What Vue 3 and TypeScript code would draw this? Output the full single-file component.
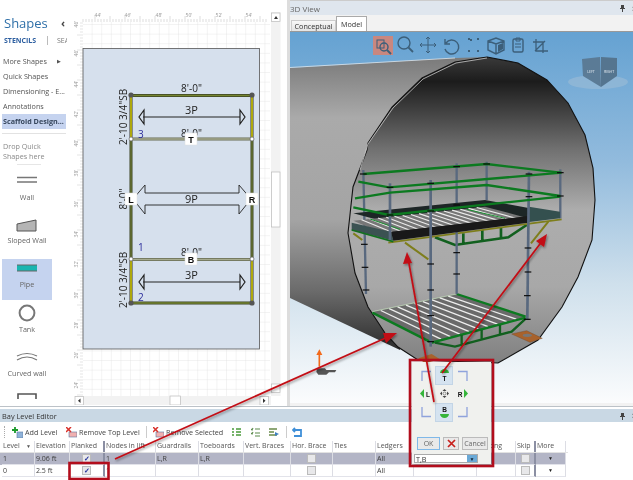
<script setup lang="ts">
type P = [number, number]
const lerp = (a: P, b: P, t: number): P => [a[0] + (b[0] - a[0]) * t, a[1] + (b[1] - a[1]) * t]
function stripes(a: P, b: P, c: P, d: P, n: number) {
  const out: { p: P; q: P }[] = []
  for (let i = 1; i <= n; i++) out.push({ p: lerp(a, b, i / (n + 1)), q: lerp(c, d, i / (n + 1)) })
  return out
}
const upperStripes = stripes([205, 212], [600, 170], [325, 262], [735, 206], 15)
const lowerStripes = stripes([262, 487], [515, 433], [440, 575], [722, 500], 9)

const posts: number[][] = [
  [235, 60, 243, 432], [315, 100, 315, 270], [437, 90, 437, 590], [515, 40, 515, 432],
  [605, 35, 605, 150], [732, 65, 727, 510], [826, 58, 826, 205],
]
const collars: P[] = [
  [238, 283], [240, 352], [243, 420], [437, 342], [437, 420], [437, 497], [437, 575], [515, 308], [515, 372],
  [729, 294], [729, 366], [727, 437], [727, 508], [235, 72], [315, 112], [437, 100], [515, 50], [605, 42],
  [732, 72], [826, 68], [315, 195], [437, 183], [515, 165], [826, 138], [732, 140],
]
const rails: string[] = [
  '235,72 605,42 826,68', '220,95 312,112 830,68', '210,145 315,128 605,105 826,138',
  '205,172 312,195 826,140',
]
const stencils = ['Quick Shapes', 'Dimensioning - E...', 'Annotations']
const topTicks = [98, 128, 159, 189, 219, 249]
const topLabels = ["44'", "46'", "48'", "50'", "52'", "54'"]
const leftLabels = [[24, "46'"], [53, "46'"], [84, "44'"], [114, "42'"], [143, "40'"], [173, "38'"], [204, "36'"], [234, "34'"], [264, "32'"], [295, "30'"], [325, "28'"], [355, "26'"], [385, "24'"]] as [number, string][]
const columns = ['Level', 'Elevation', 'Planked', 'Nodes in lift', 'Guardrails', 'Toeboards', 'Vert. Braces', 'Hor. Brace', 'Ties', 'Ledgers', 'Transoms', 'Netting', 'Skip', 'More']
const rows = [
  { cls: 'sel', level: '1', elev: '9.06 ft', nodes: '1', g: 'L,R', t: 'L,R' },
  { cls: '', level: '0', elev: '2.5 ft', nodes: '1', g: '', t: '' },
]
</script>

<template>
  <div class="app">
    <div class="top">
      <aside class="shapes">
        <div class="shapes-head"><span class="shapes-title">Shapes</span><span class="chev">‹</span></div>
        <div class="tabs"><b>STENCILS</b><i></i><span>SEA</span></div>
        <div class="stencil more">More Shapes <em>▶</em></div>
        <div v-for="s in stencils" :key="s" class="stencil">{{ s }}</div>
        <div class="stencil active">Scaffold Design...</div>
        <div class="rule"></div>
        <div class="drop">Drop Quick<br />Shapes here</div>
        <div class="short-rule"></div>
        <div class="item wall">
          <svg width="24" height="10" viewBox="0 0 24 10"><path d="M2 2.5h20M2 7h20" stroke="#777" stroke-width="1.4" /></svg>
          <span>Wall</span>
        </div>
        <div class="item sloped">
          <svg width="24" height="14" viewBox="0 0 24 14"><path d="M2 5 21 1v11H2z" fill="#b5b5b5" stroke="#555" /></svg>
          <span>Sloped Wall</span>
        </div>
        <div class="item pipe">
          <svg width="24" height="10" viewBox="0 0 24 10"><rect x="2" y="2" width="20" height="6" fill="#19b5b0" /><path d="M2 2h20M2 8h20" stroke="#666" /></svg>
          <span>Pipe</span>
        </div>
        <div class="item tank">
          <svg width="20" height="20" viewBox="0 0 20 20"><circle cx="10" cy="10" r="7.4" fill="none" stroke="#777" stroke-width="2" /></svg>
          <span>Tank</span>
        </div>
        <div class="item curved">
          <svg width="24" height="10" viewBox="0 0 24 10"><path d="M2 5Q12 0 22 5M2 9Q12 3 22 9" fill="none" stroke="#777" stroke-width="1.2" /></svg>
          <span>Curved wall</span>
        </div>
        <div class="item last">
          <svg width="24" height="8" viewBox="0 0 24 8"><path d="M3 7V2h18v5" fill="none" stroke="#555" stroke-width="1.6" /></svg>
        </div>
      </aside>

      <section class="canvas">
        <svg width="210" height="405" viewBox="73 0 210 405" class="drawing">
          <defs>
            <pattern id="grid" x="83" y="25" width="9.6" height="9.6" patternUnits="userSpaceOnUse">
              <path d="M9.6 0V9.6H0" fill="none" stroke="#dedede" stroke-width=".7" />
            </pattern>
          </defs>
          <rect x="83" y="22" width="187" height="374" fill="#fff" />
          <rect x="83" y="22" width="187" height="374" fill="url(#grid)" />
          <g class="ruler">
            <text v-for="(t, i) in topTicks" :key="t" :x="t" y="17">{{ topLabels[i] }}</text>
            <path v-for="i in 62" :key="'t' + i" :d="`M${80 + i * 3} ${i % 5 ? 19 : 16}V22`" stroke="#c8c8c8" stroke-width=".6" />
            <path v-for="i in 125" :key="'l' + i" :d="`M${i % 5 ? 80 : 77} ${20 + i * 3}H83`" stroke="#d4d4d4" stroke-width=".6" />
            <text v-for="l in leftLabels" :key="l[0]" :transform="`translate(78 ${l[0]}) rotate(-90)`">{{ l[1] }}</text>
          </g>
          <rect x="83" y="48.5" width="176.5" height="300.5" fill="#d6e0ed" stroke="#555" stroke-width=".8" />

          <path d="M131 95V139M252 95V139M131 259V303M252 259V303" stroke="#333" stroke-width="3" />
          <path d="M131 95V139M252 95V139M131 259V303M252 259V303" stroke="#d8d000" stroke-width="1.5" />
          <path d="M131 139V259M252 139V259" stroke="#3b4225" stroke-width="3" />
          <path d="M131 139V259M252 139V259" stroke="#7c8b3a" stroke-width="1" />
          <path d="M131 95.5H252M131 303H252" stroke="#3b4225" stroke-width="3.2" />
          <path d="M131 95.5H252M131 303H252" stroke="#75852f" stroke-width="1.4" />
          <path d="M131 139H252M131 259.5H252" stroke="#666b52" stroke-width="3.2" />
          <path d="M131 139H252M131 259.5H252" stroke="#a6ab90" stroke-width="1.4" />
          <circle v-for="c in [[131, 95], [252, 95], [131, 303], [252, 303]]" :key="c.join()" :cx="c[0]" :cy="c[1]" r="2.6" fill="#555" />
          <circle v-for="c in [[131, 139], [252, 139], [131, 259], [252, 259]]" :key="'w' + c.join()" :cx="c[0]" :cy="c[1]" r="2" fill="#fff" stroke="#666" stroke-width=".7" />

          <g class="dim">
            <text x="191.5" y="92">8'-0"</text>
            <text x="191.5" y="114" class="big">3P</text>
            <text x="191.5" y="137">8'-0"</text>
            <text x="191.5" y="256">8'-0"</text>
            <text x="191.5" y="279" class="big">3P</text>
            <text transform="translate(127 117) rotate(-90)">2'-10 3/4"SB</text>
            <text transform="translate(127 199) rotate(-90)">8'-0"</text>
            <text transform="translate(127 280) rotate(-90)">2'-10 3/4"SB</text>
          </g>
          <g class="arrow-thin">
            <path d="M143 117H240M144 110l-5 7 5 7zM240 110l5 7-5 7z" />
            <path d="M143 282H240M144 275l-5 7 5 7zM240 275l5 7-5 7z" />
          </g>
          <path d="M145 193V185L133 199 145 214V205H239V214L251 199 239 185V193z" fill="#d6e0ed" stroke="#222" stroke-width=".9" />
          <text x="191.5" y="203" class="big-fg">9P</text>

          <g class="handle">
            <rect x="185" y="133" width="12" height="12" /><text x="191" y="142.5">T</text>
            <rect x="125" y="193" width="12" height="12" /><text x="131" y="202.5">L</text>
            <rect x="246" y="193" width="12" height="12" /><text x="252" y="202.5">R</text>
            <rect x="185" y="253" width="12" height="12" /><text x="191" y="262.5">B</text>
          </g>
          <g class="num">
            <text x="138" y="138">3</text><text x="138" y="251">1</text><text x="138" y="301">2</text>
          </g>

          <rect x="271" y="12" width="9.5" height="384" fill="#f2f2f2" />
          <rect x="271.5" y="13" width="8.5" height="8.5" fill="#fff" stroke="#bbb" stroke-width=".7" />
          <path d="M274 19l2-3 2 3z" fill="#333" />
          <rect x="271.5" y="172" width="8.5" height="55" fill="#fff" stroke="#bbb" stroke-width=".7" />
          <rect x="271.5" y="384" width="8.5" height="8.5" fill="#fff" stroke="#bbb" stroke-width=".7" />
          <rect x="75" y="396" width="196" height="9" fill="#f2f2f2" />
          <rect x="75" y="396.5" width="8.5" height="8.5" fill="#fff" stroke="#bbb" stroke-width=".7" />
          <path d="M80.5 398.5l-2.5 2.2 2.5 2.2z" fill="#333" />
          <rect x="170" y="396" width="10.5" height="9" fill="#fff" stroke="#bbb" stroke-width=".7" />
          <rect x="260" y="396.5" width="8.5" height="8.5" fill="#fff" stroke="#bbb" stroke-width=".7" />
          <path d="M263 398.5l2.5 2.2-2.5 2.2z" fill="#333" />
        </svg>
      </section>

      <section class="view">
        <header class="view-title"><span>3D View</span><span class="pins"><svg width="7" height="8" viewBox="0 0 7 8"><path d="M2 1h3v3h1v1H4v3H3V5H1V4h1z" fill="#444" /></svg><b>×</b></span></header>
        <nav class="view-tabs"><span class="tab">Conceptual</span><span class="tab on">Model</span></nav>
        <svg class="scene" width="343" height="371" viewBox="290 32 343 371">
          <defs>
            <linearGradient id="sky" x1="0" y1="32" x2="0" y2="403" gradientUnits="userSpaceOnUse">
              <stop offset="0" stop-color="#65a2d2" /><stop offset=".35" stop-color="#92bbdd" />
              <stop offset=".68" stop-color="#cfe0ec" /><stop offset="1" stop-color="#fbfcfd" />
            </linearGradient>
            <linearGradient id="body" x1="0" y1="60" x2="0" y2="350" gradientUnits="userSpaceOnUse">
              <stop offset="0" stop-color="#7c7c7c" /><stop offset=".2" stop-color="#aaa" />
              <stop offset=".55" stop-color="#a4a4a4" /><stop offset=".8" stop-color="#6a6a6a" /><stop offset="1" stop-color="#2c2c2c" />
            </linearGradient>
            <linearGradient id="inner" x1="0" y1="57" x2="0" y2="363" gradientUnits="userSpaceOnUse">
              <stop offset="0" stop-color="#3a3a3a" /><stop offset=".08" stop-color="#1c1c1c" />
              <stop offset=".3" stop-color="#707070" /><stop offset=".5" stop-color="#adadad" />
              <stop offset=".75" stop-color="#a8a8a8" /><stop offset="1" stop-color="#808080" />
            </linearGradient>
          </defs>
          <rect x="290" y="32" width="343" height="371" fill="url(#sky)" />
          <polygon points="290,68 455,58 487,57 400,350 290,298" fill="url(#body)" />
          <polygon
            points="487,57 518,63 547,80 568,103 585,135 593,168 595,200 592,240 578,277 562,307 538,340 498,363 418,360 398,347 385,333 368,307 355,273 348,233 353,187 367,150 368,143 392,107 422,78 455,62"
            fill="url(#inner)" stroke="#111" stroke-width="1.1"
          />
          <polyline points="290,67.5 455,58" fill="none" stroke="#eee" stroke-width=".7" />
          <polyline points="360,170 368,144 393,108 423,79 456,63 487,58" fill="none" stroke="#ddd" stroke-width=".7" />

          <g transform="translate(285 150) scale(0.3333)">
            <polygon points="400,625 440,612 465,628 420,640" fill="#a8622c" />
            <polygon points="680,552 725,542 772,565 735,577" fill="#a8622c" stroke="#6b3d1b" />
            <ellipse cx="727" cy="556" rx="14" ry="5" fill="#777" />
            <polygon points="262,485 515,432 722,500 440,578" fill="#6a6a6a" />
            <line v-for="(s, i) in lowerStripes" :key="'ls' + i" :x1="s.p[0]" :y1="s.p[1]" :x2="s.q[0]" :y2="s.q[1]" stroke="#eee" stroke-width="4" />
            <path d="M262 488 440 578 722 503M515 432 722 500" fill="none" stroke="#0c7a20" stroke-width="7" />
            <path d="M262 485 515 432" fill="none" stroke="#c8e6c0" stroke-width="2" />
            <path d="M450 578 510 590 680 545 722 506M530 555V585M590 540V570M645 525V552" fill="none" stroke="#12601f" stroke-width="7" />

            <path d="M450 262 510 285 670 262 725 225M535 250V280M592 240V272M648 232V262" fill="none" stroke="#12601f" stroke-width="8" />
            <path d="M360 278 430 328M790 215 738 280M205 250 232 270" stroke="#7e7e1c" stroke-width="6" />
            <path d="M310 278 830 208" stroke="#7e7e1c" stroke-width="5" />

            <line v-for="(p, i) in posts.slice(0, 1).concat(posts.slice(3, 5), posts.slice(6))" :key="'bp' + i" :x1="p[0]" :y1="p[1]" :x2="p[2]" :y2="p[3]" stroke="#59697f" stroke-width="7" />
            <polygon points="205,190 600,150 735,175 735,215 300,215" fill="#1d2626" />
            <polygon points="205,212 600,170 735,206 325,264" fill="#777" />
            <line v-for="(s, i) in upperStripes" :key="'us' + i" :x1="s.p[0]" :y1="s.p[1]" :x2="s.q[0]" :y2="s.q[1]" stroke="#ececec" stroke-width="3.4" />
            <path d="M255 207 345 238M545 178 660 205" stroke="#1a9030" stroke-width="3" fill="none" />
            <polygon points="200,218 318,245 325,272 200,240" fill="#3b5252" />
            <polygon points="318,245 730,198 730,218 325,272" fill="#191919" />
            <polygon points="732,170 825,185 825,205 732,216" fill="#34504f" />
            <path d="M200 240 325 275" stroke="#12701f" stroke-width="5" />

            <line v-for="(p, i) in [posts[1], posts[2], posts[5]]" :key="'fp' + i" :x1="p[0]" :y1="p[1]" :x2="p[2]" :y2="p[3]" stroke="#59697f" stroke-width="8" />
            <polyline v-for="(r, i) in rails" :key="'r' + i" :points="r" fill="none" stroke="#0c7a20" stroke-width="7" />
            <path v-for="(c, i) in collars" :key="'c' + i" :d="`M${c[0] - 10} ${c[1]}h20`" stroke="#0a0a0a" stroke-width="3.5" />
          </g>

          <g class="tool" fill="none" stroke="#3c5f7a" stroke-width="1.4">
            <rect x="373" y="36" width="20" height="19" fill="#c9877f" stroke="none" />
            <rect x="377" y="40" width="7" height="8" stroke-width="1" />
            <circle cx="384" cy="47" r="4" /><path d="M387 50l4 4" stroke-width="2" />
            <circle cx="404" cy="43" r="6" /><path d="M408.500 47.500l4.500 4.500" stroke-width="1.8" />
            <path d="M428 37v16M420 45h16M426 39l2-2 2 2M426 51l2 2 2-2M422 43l-2 2 2 2M434 43l2 2-2 2" stroke-width="1" />
            <path d="M445 39v5h5M446 43a7 7 0 1 1-1 6" />
            <path d="M468 39h3v3M477 39h3M468 51h3M477 51h3" stroke-width="2" stroke-dasharray="2 1" />
            <path d="M488 41l8-3 8 3v9l-8 4-8-4zM488 41l8 3 8-3M496 44v10" /><path d="M498 45l5-2v6l-5 3z" fill="#3c5f7a" stroke="none" />
            <rect x="513" y="39" width="10" height="13" rx="1.500" /><path d="M516 38h4v3h-4zM515 44h6M515 47h6" stroke-width="1" />
            <path d="M536 39v12h12M533 42h10v11M535 51l10-10" stroke-width="1.3" />
          </g>
          <g class="cube">
            <ellipse cx="598" cy="82" rx="30" ry="7" fill="#9dbdd6" opacity=".6" />
            <polygon points="582,59 600,57 601,87 583,76" fill="#5b7b96" />
            <polygon points="601,57 617,58 617,76 601,87" fill="#55758f" />
            <text x="591" y="73">LEFT</text><text x="609" y="73">RIGHT</text>
          </g>
          <g transform="translate(285 150) scale(0.3333)">
            <path d="M103 650V612" stroke="#f26a1b" stroke-width="5" /><path d="M94 615 103 598 112 615z" fill="#f26a1b" />
            <path d="M96 655h24l4 5h30l-4 7h-18l-8 7h-24l-6-8z" fill="#555" />
          </g>
        </svg>
      </section>
    </div>

    <section class="editor">
      <header class="editor-title"><span>Bay Level Editor</span><span class="pins"><svg width="7" height="8" viewBox="0 0 7 8"><path d="M2 1h3v3h1v1H4v3H3V5H1V4h1z" fill="#444" /></svg><b>×</b></span></header>
      <div class="toolbar">
        <span class="grip"></span>
        <span class="btn add"><svg width="11" height="11" viewBox="0 0 11 11"><rect x="5" y="5" width="6" height="6" fill="#8fb2d8" stroke="#5a7ba5" stroke-width=".6" /><path d="M3 0v6M0 3h6" stroke="#1a9a2a" stroke-width="1.8" /></svg>Add Level</span>
        <span class="btn rem1"><svg width="11" height="11" viewBox="0 0 11 11"><rect x="3" y="5" width="8" height="5" fill="#f0b0b0" stroke="#5a7ba5" stroke-width=".6" /><path d="M0 0l5 5M5 0 0 5" stroke="#d8302a" stroke-width="1.500" /></svg>Remove Top Level</span>
        <i class="sep"></i>
        <span class="btn rem2"><svg width="11" height="11" viewBox="0 0 11 11"><rect x="3" y="5" width="8" height="5" fill="#f0b0b0" stroke="#5a7ba5" stroke-width=".6" /><path d="M0 0l5 5M5 0 0 5" stroke="#d8302a" stroke-width="1.500" /></svg>Remove Selected</span>
        <svg class="mini m1" width="10" height="11" viewBox="0 0 10 11"><path d="M0 2h2M0 5h2M0 8h2M4 2h5M4 5h5M4 8h5" stroke="#4a9a3a" stroke-width="1.600" /></svg>
        <svg class="mini m2" width="10" height="11" viewBox="0 0 10 11"><path d="M0 2l1 1 1-2M0 6l1 1 1-2M4 2h5M4 6h5M4 9h5" stroke="#5a8a4a" stroke-width="1.100" fill="none" /></svg>
        <svg class="mini m3" width="11" height="11" viewBox="0 0 11 11"><path d="M0 2h8M0 5h5M0 8h8" stroke="#6a8a4a" stroke-width="1.300" /><path d="M6 5l4 2-4 2z" fill="#3f7fc0" /></svg>
        <i class="sep s2"></i>
        <svg class="mini m4" width="11" height="11" viewBox="0 0 11 11"><path d="M1 3h8v6H2M3 1 1 3l2 2" fill="none" stroke="#3f8fd8" stroke-width="1.800" /></svg>
      </div>
      <div class="grid head">
        <div v-for="(c, i) in columns" :key="c" class="cell" :class="{ heavy: i === 2 || i === 12 }">{{ c }}<span v-if="i === 0" class="sort">▼</span></div>
      </div>
      <div v-for="r in rows" :key="r.level" class="grid row" :class="r.cls">
        <div class="cell">{{ r.level }}</div>
        <div class="cell">{{ r.elev }}</div>
        <div class="cell ctr heavy"><span class="check on">✓</span></div>
        <div class="cell">{{ r.nodes }}</div>
        <div class="cell">{{ r.g }}</div>
        <div class="cell">{{ r.t }}</div>
        <div class="cell"></div>
        <div class="cell ctr"><span class="check"></span></div>
        <div class="cell"></div>
        <div class="cell">All</div>
        <div class="cell"></div>
        <div class="cell"></div>
        <div class="cell ctr heavy"><span class="check"></span></div>
        <div class="cell ctr"><span class="drop-btn">▼</span></div>
      </div>
    </section>

    <div class="popup">
      <div class="pad">
        <span class="pc"><svg width="11" height="11" viewBox="0 0 11 11"><path d="M1 11V1.500H10" fill="none" stroke="#8fa3dc" stroke-width="1.300" /></svg></span>
        <span class="pc on"><svg width="11" height="14" viewBox="0 0 11 14"><path d="M1 5a4.500 4 0 0 1 9 0z" fill="#35b53a" /><text x="5.500" y="13">T</text></svg></span>
        <span class="pc"><svg width="11" height="11" viewBox="0 0 11 11"><path d="M10 11V1.500H1" fill="none" stroke="#8fa3dc" stroke-width="1.300" /></svg></span>
        <span class="pc"><svg width="12" height="11" viewBox="0 0 12 11"><path d="M4 1 0 5.500 4 10z" fill="#35b53a" /><text x="8" y="9">L</text></svg></span>
        <span class="pc"><svg width="11" height="11" viewBox="0 0 11 11"><path d="M5.500 1l-2 2h4zM5.500 10l-2-2h4zM1 5.500l2-2v4zM10 5.500l-2-2v4z" fill="#444" /><circle cx="5.500" cy="5.500" r="1.500" fill="none" stroke="#666" stroke-width=".7" /></svg></span>
        <span class="pc"><svg width="12" height="11" viewBox="0 0 12 11"><path d="M8 1l4 4.500L8 10z" fill="#35b53a" /><text x="4" y="9">R</text></svg></span>
        <span class="pc"><svg width="11" height="11" viewBox="0 0 11 11"><path d="M1 0V9.500H10" fill="none" stroke="#8fa3dc" stroke-width="1.300" /></svg></span>
        <span class="pc on"><svg width="11" height="14" viewBox="0 0 11 14"><text x="5.500" y="7">B</text><path d="M1 9a4.500 4 0 0 0 9 0z" fill="#35b53a" /></svg></span>
        <span class="pc"><svg width="11" height="11" viewBox="0 0 11 11"><path d="M10 0V9.500H1" fill="none" stroke="#8fa3dc" stroke-width="1.300" /></svg></span>
      </div>
      <div class="actions">
        <button class="ok">OK</button>
        <button class="x"><svg width="9" height="9" viewBox="0 0 9 9"><path d="M1 1l7 7M8 1 1 8" stroke="#c8201c" stroke-width="1.700" /></svg></button>
        <button class="cancel">Cancel</button>
      </div>
      <div class="combo"><span>T,B</span><em>▼</em></div>
    </div>

    <svg class="marks" width="633" height="480" viewBox="0 0 633 480">
      <defs>
        <filter id="shadow" x="-10%" y="-10%" width="120%" height="120%"><feDropShadow dx="1" dy="1.500" stdDeviation="1" flood-color="#000" flood-opacity=".4" /></filter>
      </defs>
      <g filter="url(#shadow)">
        <path d="M115 459 390 336M434 402 408 258M442 373 543 240" stroke="#c20c14" stroke-width="1.700" fill="none" />
        <path d="M397 333 386 343 383 333zM407 252 403 264 412 263zM547 234 536 241 544 247z" fill="#c20c14" />
      </g>
      <rect x="69.500" y="463" width="39" height="16" fill="none" stroke="#b20d1c" stroke-width="2.600" />
      <rect x="410" y="360" width="83" height="106" fill="none" stroke="#b20d1c" stroke-width="2.600" />
    </svg>
  </div>
</template>

<style scoped>
.app {
  position: relative;
  width: 633px;
  height: 480px;
  overflow: hidden;
  background: #fff;
  font-family: "Open Sans", "Noto Sans", sans-serif;
  font-size: 7.2px;
  color: #454545;
  display: flex;
  flex-direction: column;
  filter: blur(0.3px);
}
.top { display: flex; height: 407px; flex: none; border-bottom: 1px solid #bcc2c8; box-sizing: border-box; }
.shapes { width: 73px; flex: none; padding: 13px 0 0 2px; box-sizing: border-box; overflow: hidden; }
.shapes-head { display: flex; justify-content: space-between; align-items: center; height: 19px; padding: 0 8px 0 2px; }
.shapes-title { font-size: 13px; color: #2e6fa8; }
.chev { font-size: 11px; font-weight: 700; color: #444; }
.tabs { display: flex; align-items: center; height: 14px; margin-top: 1px; padding-left: 2px; font-size: 7px; color: #777; white-space: nowrap; overflow: hidden; }
.tabs b { color: #2c5ea0; width: 34px; font-weight: 700; }
.tabs i { width: 1px; height: 9px; background: #bbb; margin: 0 9px 0 9px; }
.tabs span { width: 10px; overflow: hidden; }
.stencil { height: 15px; line-height: 15px; padding-left: 1px; margin-right: 7px; white-space: nowrap; color: #555; overflow: hidden; }
.more { margin-top: 7px; display: flex; }
.more em { font-style: normal; font-size: 5px; margin-left: 10px; }
.active { background: #c5d3ef; font-weight: 700; color: #36465c; }
.rule { height: 1px; background: #e2e2e2; margin: 4px 7px 0 0; }
.drop { margin-top: 7px; line-height: 10px; color: #8a8a8a; padding-left: 1px; }
.short-rule { width: 24px; height: 1px; background: #e6e6e6; margin: 3px 0 0 15px; }
.item { width: 50px; display: flex; flex-direction: column; align-items: center; color: #666; }
.item span { line-height: 10px; white-space: nowrap; }
.wall { margin-top: 10px; }
.wall span { margin-top: 7px; }
.sloped { margin-top: 17px; }
.sloped span { margin-top: 2px; }
.pipe { margin-top: 14px; height: 41px; padding-top: 4px; box-sizing: border-box; background: #c5d3ef; }
.pipe span { margin-top: 6px; }
.tank { margin-top: 3px; }
.tank span { margin-top: 1px; }
.curved { margin-top: 17px; }
.curved span { margin-top: 7px; }
.last { margin-top: 14px; }
.canvas { width: 210px; flex: none; background: #fff; }
.drawing { display: block; }
.ruler text { font-size: 5px; fill: #999; text-anchor: middle; }
.dim text { font-size: 10px; fill: #222; text-anchor: middle; }
.dim text.big { font-size: 11px; }
.big-fg { font-size: 11px; fill: #222; text-anchor: middle; }
.arrow-thin path { fill: #d6e0ed; stroke: #222; stroke-width: 1.200px; }
.handle rect { fill: #fff; stroke: #ddd; stroke-width: .5px; }
.handle text { font: 700 9px "Liberation Sans", sans-serif; fill: #111; text-anchor: middle; }
.num text { font-size: 10px; fill: #2a2a9a; }
.view { flex: 1; min-width: 0; margin-left: 4px; border-left: 3px solid #ddd; background: #f2f2f2; display: flex; flex-direction: column; }
.view-title { height: 15px; background: #dfe6ee; border-top: 1px solid #ccc; box-sizing: border-box; display: flex; justify-content: space-between; align-items: center; font-size: 8px; color: #666; }
.pins { display: flex; align-items: center; gap: 6px; margin-right: -4px; }
.pins b { font-size: 9px; font-weight: 400; }
.view-tabs { height: 17px; display: flex; align-items: flex-end; padding-left: 1px; border-bottom: 1px solid #999; box-sizing: border-box; }
.tab { height: 11px; line-height: 11px; width: 45px; text-align: center; background: linear-gradient(#f8f8f8, #e4e4e4); border: 1px solid #ccc; border-bottom: 0; color: #333; box-sizing: border-box; }
.tab.on { height: 15px; line-height: 14px; width: 31px; background: #fff; border-color: #aaa; }
.scene { display: block; flex: none; }
.tool { pointer-events: none; }
.cube text { font-size: 3.500px; fill: #e8eef4; text-anchor: middle; }
.editor { flex: 1; display: flex; flex-direction: column; padding-top: 2px; background: #fff; }
.editor-title { height: 13px; background: #c9d8e4; display: flex; justify-content: space-between; align-items: center; padding-left: 2px; color: #333; font-size: 7.400px; flex: none; }
.toolbar { position: relative; height: 19px; flex: none; display: flex; align-items: center; }
.grip { position: absolute; left: 4px; top: 4px; height: 12px; border-left: 1px dotted #aaa; }
.btn { position: absolute; top: 4px; display: flex; align-items: center; gap: 2px; font-size: 7.200px; color: #444; white-space: nowrap; line-height: 12px; }
.add { left: 12px; }
.rem1 { left: 66px; }
.rem2 { left: 153px; }
.sep { position: absolute; left: 146px; top: 4px; width: 1px; height: 12px; background: #ccc; }
.s2 { left: 286px; }
.mini { position: absolute; top: 5px; }
.m1 { left: 232px; }
.m2 { left: 251px; }
.m3 { left: 269px; }
.m4 { left: 292px; }
.grid {
  display: grid;
  grid-template-columns: 33px 35px 35px 51px 43px 45px 47px 42px 43px 38px 63px 39px 20px 30px;
  padding-left: 2px;
  width: 566px;
  box-sizing: border-box;
  font-size: 7px;
}
.head { height: 11px; flex: none; background: #fff; border-bottom: 1px solid #e2e2e2; box-sizing: content-box; }
.row { height: 12px; flex: none; }
.sel { background: #b3b5c6; }
.cell { border-right: 1px solid #dcdde4; padding-left: 1px; line-height: 11px; white-space: nowrap; overflow: hidden; color: #3c3c3c; position: relative; }
.head .cell { color: #555; line-height: 10px; }
.heavy { border-right: 2px solid #8b8fa3; }
.row .cell { border-bottom: 1px solid #e2e3ea; box-sizing: border-box; }
.ctr { display: flex; align-items: center; justify-content: center; padding: 0; }
.sort { position: absolute; right: 3px; top: 0; font-size: 5px; }
.check { width: 7px; height: 7px; background: #e8e8ea; border: 1px solid #bbb; font-size: 7px; line-height: 7px; text-align: center; color: #22309a; font-weight: 700; }
.drop-btn { font-size: 5px; color: #222; }
.popup {
  position: absolute;
  left: 412px;
  top: 362px;
  width: 79px;
  height: 102px;
  background: #f0f1ee;
  box-shadow: 1px 1px 3px rgba(0, 0, 0, .45);
  box-sizing: border-box;
  padding: 4px 0 0 5px;
}
.pad { display: grid; grid-template-columns: repeat(3, 18px); grid-auto-rows: 18.500px; }
.pc { display: flex; align-items: center; justify-content: center; }
.pc.on { background: #d5e3f0; border: 1px solid #c3d5e6; box-sizing: border-box; }
.pc text { font: 700 6.500px "Liberation Sans", sans-serif; fill: #111; text-anchor: middle; }
.actions { position: absolute; left: 5px; top: 75px; display: flex; gap: 3px; }
.actions button { height: 13px; padding: 0; font: 7px "Open Sans", sans-serif; color: #666; background: #e9e9e9; border: 1px solid #bbb; display: flex; align-items: center; justify-content: center; }
.ok { width: 23px; border-color: #7fb8e8 !important; }
.x { width: 16px; }
.cancel { width: 26px; }
.combo { position: absolute; left: 2px; top: 92px; width: 64px; height: 9px; background: #fff; border: 1px solid #aaa; box-sizing: border-box; display: flex; justify-content: space-between; line-height: 8px; padding-left: 1px; color: #333; }
.combo em { width: 10px; background: #6aa9d6; font-style: normal; font-size: 5px; text-align: center; color: #123; }
.marks { position: absolute; left: 0; top: 0; pointer-events: none; }
</style>
